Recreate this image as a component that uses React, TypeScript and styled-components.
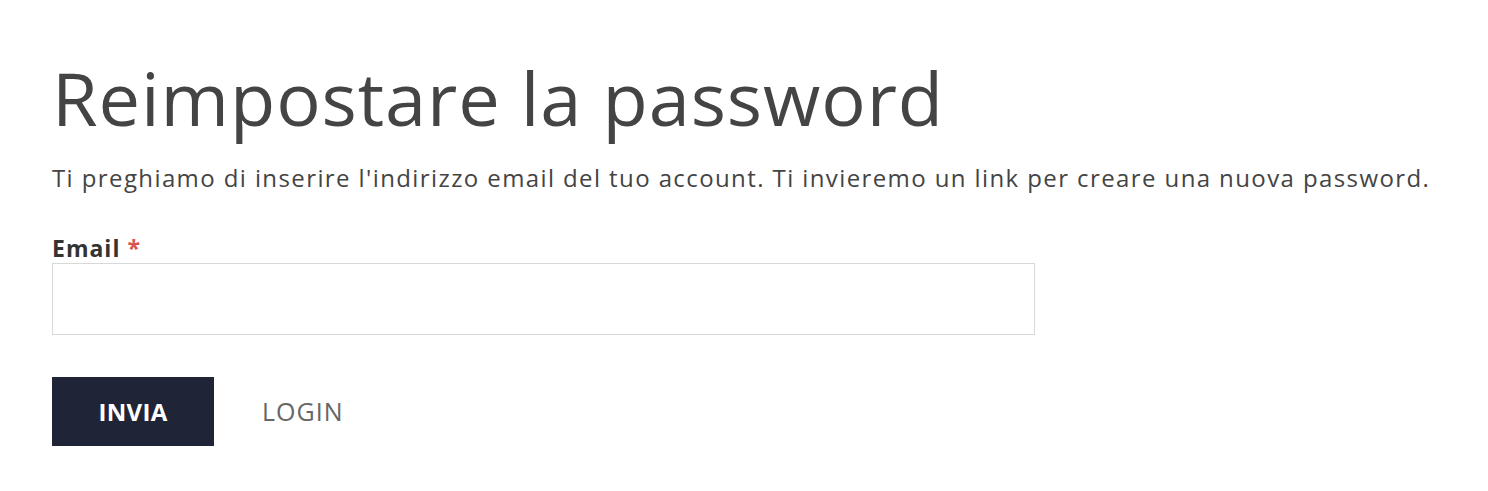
import React from "react";
import styled, { createGlobalStyle } from "styled-components";

const Global = createGlobalStyle`
  html, body { margin: 0; padding: 0; background: #fff; }
  body { font-family: "Open Sans", "Liberation Sans", sans-serif; color: #444; }
`;

const Page = styled.div`
  padding: 54px 52px 0 52px;
  display: flex;
  flex-direction: column;
`;

const Title = styled.h1`
  margin: 0;
  font-size: 74px;
  font-weight: 400;
  line-height: 88px;
  color: #444;
  letter-spacing: 0.9px;
`;

const Intro = styled.p`
  margin: 20px 0 0 0;
  font-size: 24px;
  line-height: 32px;
  color: #444;
  letter-spacing: 1.4px;
  white-space: nowrap;
`;

const Field = styled.div`
  margin-top: 39px;
  display: flex;
  flex-direction: column;
`;

const Label = styled.label`
  font-size: 23px;
  font-weight: 700;
  color: #333;
  line-height: 30px;
  letter-spacing: 1px;
`;

const Required = styled.span`
  color: #d9534f;
`;

const Input = styled.input`
  width: 983px;
  height: 72px;
  box-sizing: border-box;
  border: 1px solid #d8d8d8;
  background: #fff;
  outline: none;
  font-size: 22px;
  padding: 0 16px;
  font-family: inherit;
  margin: 0;
`;

const Actions = styled.div`
  margin-top: 42px;
  display: flex;
  align-items: center;
  gap: 48px;
`;

const Primary = styled.button`
  width: 162px;
  height: 69px;
  padding: 0;
  background: #1f2537;
  color: #fff;
  border: none;
  font-family: inherit;
  font-weight: 700;
  font-size: 24px;
  letter-spacing: 0.3px;
  cursor: pointer;
`;

const Link = styled.a`
  font-size: 25px;
  color: #666;
  text-decoration: none;
  text-transform: uppercase;
  letter-spacing: 1px;
  line-height: 69px;
`;

export default function App() {
  return (
    <>
      <Global />
      <Page>
        <Title>Reimpostare la password</Title>
        <Intro>
          Ti preghiamo di inserire l'indirizzo email del tuo account. Ti invieremo un link per creare una nuova password.
        </Intro>
        <Field>
          <Label htmlFor="email">
            Email <Required>*</Required>
          </Label>
          <Input id="email" type="email" />
        </Field>
        <Actions>
          <Primary>INVIA</Primary>
          <Link href="#">Login</Link>
        </Actions>
      </Page>
    </>
  );
}
